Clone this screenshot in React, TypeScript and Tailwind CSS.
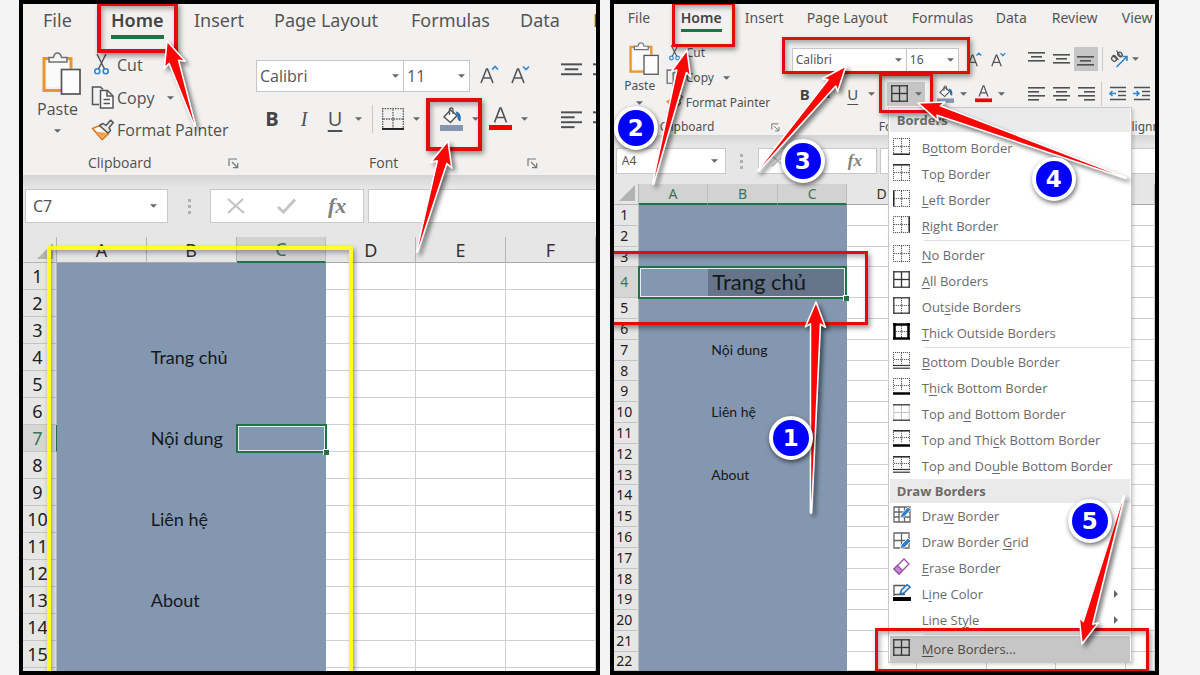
import type { ReactNode } from "react";

type Point = [number, number];
type Line = "dot" | "faint" | "thin" | "bold" | "thick" | "double";

const INK = "#505050";

function Caret({ className = "" }: { className?: string }) {
  return (
    <svg viewBox="0 0 8 4" className={`h-1 w-[7px] shrink-0 ${className}`} aria-hidden="true">
      <path d="M0 0h8L4 4z" fill="#666" />
    </svg>
  );
}

function PasteIcon({ className }: { className: string }) {
  return (
    <svg viewBox="0 0 39 43" className={className} fill="none" aria-hidden="true">
      <path d="M9 6.500H2v32h17M24 6.500h5v10" stroke="#e8962e" strokeWidth="3" />
      <path d="M5 9v26h14V17h8V9z" fill="#fafafa" />
      <path d="M7 10V5.500h4.500C12 2.500 13.500 1 15.500 1s3.500 1.500 4 4.500H25V10z" fill="#f7f7f7" stroke="#707070" strokeWidth="1.500" />
      <rect x="19.500" y="17.500" width="18.500" height="24.500" fill="#fdfdfd" stroke="#555" strokeWidth="1.700" />
    </svg>
  );
}

function CutIcon({ className }: { className: string }) {
  return (
    <svg viewBox="0 0 15 21" className={className} fill="none" aria-hidden="true">
      <path d="M3 0l7.500 15M12 0L4.500 15" stroke="#555" strokeWidth="1.500" />
      <circle cx="3.300" cy="17.300" r="2.500" stroke="#2f86cf" strokeWidth="1.600" />
      <circle cx="11.700" cy="17.300" r="2.500" stroke="#2f86cf" strokeWidth="1.600" />
    </svg>
  );
}

function CopyIcon({ className }: { className: string }) {
  return (
    <svg viewBox="0 0 24 23" className={className} fill="none" stroke="#555" strokeWidth="1.500" aria-hidden="true">
      <path d="M8 18.500H1.500V1h8L12 3.500" />
      <path d="M9.500 4.500h7l5.500 5.500v12H9.500z" fill="#fafafa" />
      <path d="M16 4.500V10h6M12.500 13.500h6.500M12.500 17.500h6.500" />
    </svg>
  );
}

function PainterIcon({ className }: { className: string }) {
  return (
    <svg viewBox="0 0 24 22" className={className} fill="none" aria-hidden="true">
      <path d="M9 6.500L1.500 9.500 11 20.500l6.500-6z" fill="#fff" stroke="#e07d1c" strokeWidth="1.800" strokeLinejoin="round" />
      <path d="M5 12.500L11 19l5-5z" fill="#f0a050" />
      <path d="M8.500 6.500L12 4.500l3 2 4.500-5.300 2.800 2.300-4.300 5.200 1.500 3-2.500 2.300z" fill="#e9e9e9" stroke="#555" strokeWidth="1.500" strokeLinejoin="round" />
    </svg>
  );
}

function Launcher({ className }: { className: string }) {
  return (
    <svg viewBox="0 0 11 11" className={className} fill="none" stroke="#777" strokeWidth="1.200" aria-hidden="true">
      <path d="M1 8V1h8M4 4l5.500 5.500M9.700 5v4.700H5" />
    </svg>
  );
}

function FontSizeIcon({ up, className }: { up?: boolean; className: string }) {
  return (
    <svg viewBox="0 0 19 19" className={className} fill="none" aria-hidden="true">
      <path d="M1 18L6.500 4h1L13 18M3 13h8" stroke="#555" strokeWidth="1.600" />
      <path d={up ? "M12 4.500L15 1.500l3 3" : "M12 1.500l3 3 3-3"} stroke="#2f86cf" strokeWidth="1.600" />
    </svg>
  );
}

function FillIcon({ className }: { className: string }) {
  return (
    <svg viewBox="0 0 23 24" className={className} fill="none" aria-hidden="true">
      <path d="M10.500 3L4 10l6.500 5.500L17 8.500z" fill="#fff" stroke="#555" strokeWidth="1.500" />
      <path d="M9.500 8V2.500c0-2 3.500-2 3.500 0V7" stroke="#555" strokeWidth="1.300" />
      <path d="M15.500 4.500c4.500.5 6 4 5 10-2.500-.5-3.500-3-3-5.500z" fill="#1f6fb8" />
      <path d="M0 18h23v6H0z" fill="#8497b0" />
    </svg>
  );
}

function FontColorIcon({ className }: { className: string }) {
  return (
    <svg viewBox="0 0 23 24" className={className} fill="none" aria-hidden="true">
      <path d="M5.500 15.500L11 1h1l5.500 14.500M7.500 10.500h8" stroke="#555" strokeWidth="1.700" />
      <path d="M0 18h23v5H0z" fill="#f20000" />
    </svg>
  );
}

function Bars({ rows, className }: { rows: [number, number][]; className: string }) {
  return (
    <svg viewBox="0 0 17 16" className={`shrink-0 ${className}`} aria-hidden="true">
      {rows.map(([x, w], i) => (
        <rect key={i} x={x} y={i * 4 + 1} width={w} height="1.600" fill={INK} />
      ))}
    </svg>
  );
}

const LEFT_BARS: [number, number][] = [[0, 17], [0, 11], [0, 17], [0, 11]];
const CENTER_BARS: [number, number][] = [[0, 17], [3, 11], [0, 17], [3, 11]];
const RIGHT_BARS: [number, number][] = [[0, 17], [6, 11], [0, 17], [6, 11]];
const THREE_BARS: [number, number][] = [[0, 17], [3, 11], [0, 17]];

function IndentIcon({ out }: { out?: boolean }) {
  return (
    <svg viewBox="0 0 17 16" className="h-4 w-[17px] shrink-0" fill="none" aria-hidden="true">
      <path d="M1 1.500h16M9 5.500h8M9 9.500h8M1 13.500h16" stroke={INK} strokeWidth="1.500" />
      <path d={out ? "M7 7.500H1M3.500 5L1 7.500 3.500 10" : "M0 7.500h6M3.500 5L6 7.500 3.500 10"} stroke="#2f86cf" strokeWidth="1.600" />
    </svg>
  );
}

function OrientationIcon() {
  return (
    <svg viewBox="0 0 18 18" className="h-[18px] w-[18px] shrink-0" fill="none" aria-hidden="true">
      <ellipse cx="4" cy="9" rx="2" ry="2.600" transform="rotate(-45 4 9)" stroke={INK} strokeWidth="1.300" />
      <path d="M2.500 6c1.500-1 2.500-.5 3.500 1l2.500 3M6.500.5l4.500 6.500" stroke={INK} strokeWidth="1.300" />
      <ellipse cx="10" cy="4.500" rx="2" ry="2.400" transform="rotate(-45 10 4.500)" stroke={INK} strokeWidth="1.300" />
      <path d="M6.500 17L16.500 7M12.500 6.500h4.500V11" stroke="#2f86cf" strokeWidth="1.600" />
    </svg>
  );
}

const LINE_STYLE: Record<Line, { stroke: string; width: number; dash?: string }> = {
  dot: { stroke: "#5c5c5c", width: 1, dash: "1.2 0.8" },
  faint: { stroke: "#c4c4c4", width: 1 },
  thin: { stroke: "#333", width: 1.3 },
  bold: { stroke: "#222", width: 1.5 },
  thick: { stroke: "#000", width: 2.5 },
  double: { stroke: "#333", width: 1.2 },
};

interface BorderProps {
  t?: Line;
  r?: Line;
  b?: Line;
  l?: Line;
  m?: Line;
  className?: string;
}

function BorderIcon({ t = "dot", r = "dot", b = "dot", l = "dot", m = "dot", className = "h-[17px] w-[17px]" }: BorderProps) {
  const low = b === "thick" || b === "double" ? (r === "thick" ? 15.5 : 12.5) : 16.5;
  const mid = low > 14 ? 8.5 : 7.5;
  const stroke = (kind: Line, d: string) => {
    const s = LINE_STYLE[kind];
    return <path d={d} stroke={s.stroke} strokeWidth={s.width} strokeDasharray={s.dash} />;
  };
  const near = (kind: Line) => (kind === "thick" ? 1.5 : kind === "dot" ? 0.5 : 0.8);
  const far = (kind: Line) => 17 - near(kind);
  return (
    <svg viewBox="0 0 17 17" className={`shrink-0 ${className}`} fill="none" aria-hidden="true">
      {stroke(m, `M8.500 1V${low}`)}
      {stroke(m, `M1 ${mid}H16.500`)}
      {m === "dot" && <circle cx="8.500" cy={mid} r="1.200" fill="#888" />}
      {stroke(l, `M${near(l)} 0V${low}`)}
      {stroke(r, `M${far(r)} 0V${low}`)}
      {stroke(t, `M0 ${near(t)}H17`)}
      {b === "double" && stroke(b, "M0 13.500H17")}
      {stroke(b, `M0 ${far(b)}H17`)}
    </svg>
  );
}

const ALL_THIN: BorderProps = { t: "thin", r: "thin", b: "thin", l: "thin", m: "thin" };

function PencilGrid({ low }: { low?: boolean }) {
  return (
    <svg viewBox="0 0 18 17" className="h-[17px] w-[18px] shrink-0" fill="none" aria-hidden="true">
      <path d={low ? "M1 1h15v15H1zM8.500 1v15M1 8.500h15" : "M1 1h16v15H1zM6 1v15M11.500 1v15M1 6h16M1 11h16"} stroke="#666" strokeWidth="1.300" />
      <path d={low ? "M7 17l1.500-4.500L15 6l3 3-6.500 6.500z" : "M7 12l1.500-4L15 1l3 2.500-6.500 7z"} fill="#2f7fc4" stroke="#fff" strokeWidth=".8" />
    </svg>
  );
}

function EraserIcon() {
  return (
    <svg viewBox="0 0 17 17" className="h-[17px] w-[17px] shrink-0" fill="none" aria-hidden="true">
      <path d="M11 1l5 5L6 16l-5-5z" fill="#fff" stroke="#9b4fa8" strokeWidth="1.300" />
      <path d="M4.500 7.500l5 5L6 16l-5-5z" fill="#c98ad3" stroke="#9b4fa8" strokeWidth="1.300" />
    </svg>
  );
}

function LineColorIcon() {
  return (
    <svg viewBox="0 0 18 17" className="h-[17px] w-[18px] shrink-0" fill="none" aria-hidden="true">
      <path d="M1 12V1.500h11M12 10.500H1" stroke="#555" strokeWidth="1.300" />
      <path d="M7 10l1.500-4L14 .7l3 2.300-6 6z" fill="#e8f2fb" stroke="#2271b5" strokeWidth="1.500" />
      <path d="M0 13h18v4H0z" fill="#000" />
    </svg>
  );
}

function CrossIcon({ className }: { className: string }) {
  return (
    <svg viewBox="0 0 18 16" className={className} fill="none" aria-hidden="true">
      <path d="M1 1l16 14M16 1L1 15" stroke="#c2c2c2" strokeWidth="2" />
    </svg>
  );
}

function CheckIcon({ className }: { className: string }) {
  return (
    <svg viewBox="0 0 19 16" className={className} fill="none" aria-hidden="true">
      <path d="M1 9l5.500 5L18 1.500" stroke="#c6c6c6" strokeWidth="3" />
    </svg>
  );
}

function Dots() {
  return (
    <span className="flex flex-col gap-[3px]" aria-hidden="true">
      <i className="block size-[3px] bg-[#b0b0b0]" />
      <i className="block size-[3px] bg-[#b0b0b0]" />
      <i className="block size-[3px] bg-[#b0b0b0]" />
    </span>
  );
}

function Arrow({ tip, tail, head = 25, half = 11, neck = 5 }: { tip: Point; tail: Point; head?: number; half?: number; neck?: number }) {
  const dx = tail[0] - tip[0];
  const dy = tail[1] - tip[1];
  const len = Math.hypot(dx, dy);
  const at = (along: number, side: number) =>
    `${tip[0] + (dx * along - dy * side) / len},${tip[1] + (dy * along + dx * side) / len}`;
  const points = [at(0, 0), at(head, half), at(head - 3, neck), at(len, 0.6), at(len, -0.6), at(head - 3, -neck), at(head, -half)];
  return <polygon points={points.join(" ")} fill="#fb0505" stroke="#fff" strokeWidth="1.600" strokeLinejoin="round" />;
}

function Mark({ className }: { className: string }) {
  return <div className={`pointer-events-none absolute z-20 shadow-[2px_3px_5px_rgba(0,0,0,0.4),inset_2px_3px_5px_rgba(0,0,0,0.3)] ${className}`} />;
}

function Badge({ n, className }: { n: number; className: string }) {
  return (
    <div className={`absolute z-30 flex size-11 items-center justify-center rounded-full border-4 border-white bg-[#0000fb] font-['DejaVu_Sans',sans-serif] text-[23px] font-bold text-white shadow-[1px_2px_5px_rgba(0,0,0,0.6)] ${className}`}>
      {n}
    </div>
  );
}

function Drop({ label, value, className, size }: { label: string; value: string; className: string; size: string }) {
  return (
    <label className={`flex shrink-0 items-center border border-[#c6c6c6] bg-white ${className}`}>
      <select aria-label={label} defaultValue={value} className={`min-w-0 flex-1 appearance-none bg-transparent pl-[3px] text-[#555] outline-none ${size}`}>
        <option>{value}</option>
      </select>
      <Caret className="mr-1" />
    </label>
  );
}

interface TabsProps {
  tabs: [string, string][];
  className: string;
  bar: string;
}

function Tabs({ tabs, className, bar }: TabsProps) {
  return (
    <nav className={`flex shrink-0 overflow-hidden whitespace-nowrap text-[#555] ${className}`}>
      {tabs.map(([name, width]) => (
        <button key={name} type="button" className={`flex shrink-0 flex-col items-start ${width}`}>
          {name === "Home" ? (
            <span className="flex flex-col font-semibold text-[#444]">
              {name}
              <span className={`bg-[#217346] ${bar}`} />
            </span>
          ) : (
            name
          )}
        </button>
      ))}
    </nav>
  );
}

interface SheetProps {
  columns: string[];
  widths: string[];
  rows: number;
  filler?: boolean;
  texts: Record<number, string>;
  activeCols: string[];
  activeRow: number;
  merged?: boolean;
  headRow: string;
  headCell: string;
  rowHead: string;
  rowSize: (n: number) => string;
  cellText: (n: number) => string;
}

function Sheet(p: SheetProps) {
  return (
    <table className="flex flex-1 flex-col bg-white">
      <thead className="block shrink-0">
        <tr className={`flex bg-[#e6e6e6] ${p.headRow}`}>
          <th className={`flex shrink-0 items-end justify-end border-r border-b border-[#b5b5b5] pr-[3px] pb-[3px] ${p.headCell}`}>
            <svg viewBox="0 0 10 10" className="size-4 shrink-0" aria-label="Select all">
              <path d="M10 0v10H0z" fill="#b3b3b3" />
            </svg>
          </th>
          {p.columns.map((c, i) => (
            <th
              key={c || "edge"}
              scope="col"
              className={`flex min-w-0 items-center justify-center overflow-hidden border-r font-normal ${p.widths[i]} ${
                p.activeCols.includes(c)
                  ? "border-b-2 border-r-[#bcbcbc] border-b-[#217346] bg-[#d2d2d2] text-[#3b7456]"
                  : "border-b border-r-[#b5b5b5] border-b-[#a8a8a8] text-[#333]"
              }`}
            >
              {c}
            </th>
          ))}
        </tr>
      </thead>
      <tbody className="flex flex-1 flex-col">
        {Array.from({ length: p.rows }, (_, i) => i + 1).map((n) => (
          <tr key={n} className={`flex ${p.rowSize(n)}`}>
            <th
              scope="row"
              className={`flex shrink-0 items-center justify-center border-r border-b border-b-[#c4c4c4] font-normal ${p.rowHead} ${
                n === p.activeRow ? "border-r-[#217346] bg-[#d6d6d6] text-[#3b7456]" : "border-r-[#bdbdbd] bg-[#e6e6e6] text-[#222]"
              }`}
            >
              {n}
            </th>
            {p.columns.map((c, i) => {
              const dark = p.merged && n === p.activeRow && (i === 1 || i === 2);
              const look = dark ? "border-[#667489] bg-[#667489]" : i < 3 ? "border-[#8497b0] bg-[#8497b0]" : "border-[#d0d0d0]";
              return (
                <td key={c || "edge"} className={`relative flex min-w-0 items-center border-r border-b ${p.widths[i]} ${look}`}>
                  {c === "B" && p.texts[n] && (
                    <span className={`z-10 whitespace-nowrap text-[#15181c] ${p.cellText(n)}`}>{p.texts[n]}</span>
                  )}
                  {n === p.activeRow && c === (p.merged ? "A" : "C") && (
                    <span className={`absolute -top-px -bottom-[2px] -left-px z-10 border-2 border-[#217346] ${p.merged ? "w-[calc(300%+4px)]" : "w-[calc(100%+3px)]"}`}>
                      <span className="block h-full border border-[#e8ecf1]" />
                      <span className="absolute -right-1 -bottom-1 size-[6px] border-t border-l border-white bg-[#217346]" />
                    </span>
                  )}
                </td>
              );
            })}
          </tr>
        ))}
        {p.filler && (
          <tr className="flex min-h-[3px] flex-1">
            <th className={`border-r border-[#bdbdbd] bg-[#e6e6e6] ${p.rowHead}`} />
            {p.columns.map((c, i) => (
              <td key={c} className={`border-r ${p.widths[i]} ${i < 3 ? "border-[#8497b0] bg-[#8497b0]" : "border-[#d0d0d0]"}`} />
            ))}
          </tr>
        )}
      </tbody>
    </table>
  );
}

const BIG_TABS: [string, string][] = [
  ["File", "w-[68px]"],
  ["Home", "w-[83px]"],
  ["Insert", "w-20"],
  ["Page Layout", "w-[137px]"],
  ["Formulas", "w-[109px]"],
  ["Data", "w-[73px]"],
  ["Review", "w-20"],
];

const SMALL_TABS: [string, string][] = [
  ["File", "w-[53px]"],
  ["Home", "w-16"],
  ["Insert", "w-[62px]"],
  ["Page Layout", "w-[105px]"],
  ["Formulas", "w-[84px]"],
  ["Data", "w-14"],
  ["Review", "w-[70px]"],
  ["View", "w-12"],
];

function FillPanel() {
  return (
    <section className="relative flex min-w-0 flex-[581] flex-col overflow-hidden border-4 border-black bg-[#f2f1f0]">
      <Tabs tabs={BIG_TABS} className="h-10 pt-[2px] pl-5 text-lg leading-7" bar="mt-px h-1" />
      <div className="flex h-[131px] shrink-0 overflow-hidden font-['Open_Sans','Noto_Sans',sans-serif] text-base whitespace-nowrap text-[#505050]">
        <div className="relative flex w-[222px] shrink-0 flex-col">
          <div className="flex h-[107px]">
            <button type="button" className="flex w-[69px] flex-col items-center pt-2">
              <PasteIcon className="ml-2 h-[43px] w-[39px]" />
              <span className="leading-7">Paste</span>
              <Caret className="mt-[6px]" />
            </button>
            <div className="flex flex-col pt-1">
              <button type="button" className="flex h-[33px] items-center">
                <CutIcon className="mr-2 ml-[2px] h-[21px] w-[15px]" />
                Cut
              </button>
              <button type="button" className="flex h-[33px] items-center">
                <CopyIcon className="mr-[2px] -ml-px h-[23px] w-6" />
                Copy
                <Caret className="ml-3" />
              </button>
              <button type="button" className="flex h-8 items-center">
                <PainterIcon className="mr-[2px] -ml-px h-[22px] w-6" />
                Format Painter
              </button>
            </div>
          </div>
          <div className="flex h-6 items-center justify-between pr-[6px] pl-[65px] text-sm">
            Clipboard
            <Launcher className="size-[11px]" />
          </div>
        </div>
        <div className="mt-[2px] mb-[5px] w-px bg-[#c4c4c4]" />
        <div className="flex w-[299px] shrink-0 flex-col">
          <div className="mt-4 flex h-8 pl-[11px]">
            <Drop label="Font" value="Calibri" className="w-[148px]" size="h-[30px] text-base" />
            <Drop label="Font size" value="11" className="-ml-px w-[67px]" size="h-[30px] text-base" />
            <button type="button" aria-label="Increase font size" className="ml-[10px]">
              <FontSizeIcon up className="mb-1 size-[19px]" />
            </button>
            <button type="button" aria-label="Decrease font size" className="ml-3">
              <FontSizeIcon className="mb-1 size-[19px]" />
            </button>
          </div>
          <div className="mt-[7px] flex h-10 items-center pl-[11px] text-xl">
            <button type="button" className="w-8 font-bold text-[#444]">B</button>
            <button type="button" className="w-8 font-['Liberation_Serif',serif] italic">I</button>
            <button type="button" className="w-[30px] underline underline-offset-4">U</button>
            <Caret className="ml-[5px]" />
            <div className="ml-[10px] h-7 w-px bg-[#c8c8c8]" />
            <button type="button" aria-label="Borders" className="ml-[9px] flex">
              <BorderIcon b="bold" className="size-[22px]" />
            </button>
            <Caret className="ml-[9px]" />
            <button type="button" aria-label="Fill color" className="ml-5 flex">
              <FillIcon className="h-6 w-[23px]" />
            </button>
            <Caret className="ml-[9px]" />
            <button type="button" aria-label="Font color" className="ml-[10px] flex">
              <FontColorIcon className="h-6 w-[23px]" />
            </button>
            <Caret className="ml-[9px]" />
          </div>
          <div className="mt-3 flex h-6 items-center justify-between pr-[6px] pl-[124px] text-sm">
            Font
            <Launcher className="size-[11px]" />
          </div>
        </div>
        <div className="mt-[2px] mb-[5px] w-px bg-[#c4c4c4]" />
        <div className="flex shrink-0 flex-col gap-[28px] pt-[18px] pl-[17px]">
          <div className="flex gap-[11px]">
            <Bars rows={THREE_BARS} className="h-5 w-[21px]" />
            <Bars rows={THREE_BARS} className="h-5 w-[21px]" />
          </div>
          <div className="flex gap-[11px]">
            <Bars rows={LEFT_BARS} className="h-5 w-[21px]" />
            <Bars rows={CENTER_BARS} className="h-5 w-[21px]" />
          </div>
        </div>
      </div>
      <div className="flex h-[62px] shrink-0 items-start bg-gradient-to-b from-[#d3d3d3] to-[#e6e6e6] to-20% pt-[14px] pl-[2px] text-[#555]">
        <label className="flex h-[34px] w-[143px] shrink-0 items-center border border-[#c8c8c8] bg-white">
          <input aria-label="Name box" defaultValue="C7" className="min-w-0 flex-1 pl-[7px] text-base outline-none" />
          <Caret className="mr-[10px]" />
        </label>
        <div className="flex h-[34px] w-[42px] shrink-0 items-center justify-center">
          <Dots />
        </div>
        <div className="flex h-[34px] w-[154px] shrink-0 items-center border border-[#c8c8c8] bg-white">
          <button type="button" aria-label="Cancel" className="ml-4"><CrossIcon className="h-4 w-[18px]" /></button>
          <button type="button" aria-label="Enter" className="ml-8"><CheckIcon className="h-4 w-[19px]" /></button>
          <button type="button" className="ml-8 font-['Liberation_Serif',serif] text-[22px] leading-7 font-bold text-[#808080] italic">fx</button>
        </div>
        <input aria-label="Formula" className="ml-1 h-[34px] min-w-0 flex-1 border border-r-0 border-[#c8c8c8] bg-white px-2 outline-none" />
      </div>
      <Sheet
        columns={["A", "B", "C", "D", "E", "F"]}
        widths={["flex-1", "flex-1", "flex-1", "flex-1", "flex-1", "flex-1"]}
        rows={15}
        filler
        texts={{ 4: "Trang chủ", 7: "Nội dung", 10: "Liên hệ", 13: "About" }}
        activeCols={["C"]}
        activeRow={7}
        headRow="h-[26px] text-lg"
        headCell="w-[34px]"
        rowHead="w-[34px] pr-1 text-lg leading-6"
        rowSize={() => "h-[27px] shrink-0"}
        cellText={() => "pl-[4px] font-['Lato','Noto_Sans',sans-serif] text-lg leading-6"}
      />
      <Mark className="top-[242px] -bottom-2 left-6 w-[306px] border-4 border-[#ffff20]" />
      <Mark className="-top-[2px] left-[74px] h-[51px] w-[81px] border-4 border-[#e30b0b]" />
      <Mark className="top-[94px] left-[403px] h-[53px] w-14 border-4 border-[#e30b0b]" />
      <svg viewBox="23 4 573 667" className="pointer-events-none absolute top-0 left-0 z-20 h-[667px] w-[573px] drop-shadow-[3px_3px_2px_rgba(0,0,0,0.5)]" aria-hidden="true">
        <Arrow tip={[167, 41]} tail={[195, 126]} />
        <Arrow tip={[448, 141]} tail={[417, 252]} />
      </svg>
    </section>
  );
}

type Item = { icon: ReactNode; before: string; key: string; after: string; sub?: boolean };

const item = (icon: ReactNode, before: string, key: string, after: string, sub = false): Item => ({ icon, before, key, after, sub });

const SIDES = [
  item(<BorderIcon b="bold" />, "B", "o", "ttom Border"),
  item(<BorderIcon t="bold" />, "To", "p", " Border"),
  item(<BorderIcon l="bold" />, "", "L", "eft Border"),
  item(<BorderIcon r="bold" />, "", "R", "ight Border"),
];

const WHOLE = [
  item(<BorderIcon />, "", "N", "o Border"),
  item(<BorderIcon {...ALL_THIN} />, "", "A", "ll Borders"),
  item(<BorderIcon t="thin" r="thin" b="thin" l="thin" />, "Out", "s", "ide Borders"),
  item(<BorderIcon t="thick" r="thick" b="thick" l="thick" />, "", "T", "hick Outside Borders"),
];

const MIXED = [
  item(<BorderIcon b="double" />, "", "B", "ottom Double Border"),
  item(<BorderIcon b="thick" />, "T", "h", "ick Bottom Border"),
  item(<BorderIcon t="thin" b="thin" l="faint" r="faint" m="faint" />, "Top an", "d", " Bottom Border"),
  item(<BorderIcon t="bold" b="thick" />, "Top and Thi", "c", "k Bottom Border"),
  item(<BorderIcon t="bold" b="double" />, "Top and Do", "u", "ble Bottom Border"),
];

const DRAW = [
  item(<PencilGrid />, "Dra", "w", " Border"),
  item(<PencilGrid low />, "Draw Border ", "G", "rid"),
  item(<EraserIcon />, "", "E", "rase Border"),
  item(<LineColorIcon />, "L", "i", "ne Color", true),
  item(null, "Line St", "y", "le", true),
];

const MORE = [item(<BorderIcon {...ALL_THIN} />, "", "M", "ore Borders...")];

function MenuItems({ items, active }: { items: Item[]; active?: boolean }) {
  return items.map((it) => (
    <button
      key={it.before + it.key + it.after}
      type="button"
      role="menuitem"
      className={`flex h-[26px] w-full items-center pl-[3px] ${active ? "bg-[#c6c6c6] text-[#4a4a4a]" : "text-[#6a6a6a]"}`}
    >
      <span className="w-[29px] shrink-0 pb-[3px] text-left">{it.icon}</span>
      <span>
        {it.before}
        <u className="underline-offset-2">{it.key}</u>
        {it.after}
      </span>
      {it.sub && (
        <svg viewBox="0 0 4 8" className="mr-3 ml-auto h-2 w-1" aria-hidden="true">
          <path d="M0 0l4 4-4 4z" fill="#666" />
        </svg>
      )}
    </button>
  ));
}

function BordersMenu() {
  return (
    <div role="menu" className="absolute top-[103px] left-[274px] z-20 w-[244px] border border-[#c8c8c8] bg-white px-px font-['Open_Sans','Noto_Sans',sans-serif] text-[13px] leading-5 whitespace-nowrap shadow-[2px_2px_3px_rgba(0,0,0,0.15)]">
      <div className="mb-[3px] flex h-6 items-center bg-[#eaeaea] pl-[7px] font-bold text-[#6a6a6a]">Borders</div>
      <MenuItems items={SIDES} />
      <div className="my-px ml-[34px] h-px bg-[#dedede]" />
      <MenuItems items={WHOLE} />
      <div className="my-px ml-[34px] h-px bg-[#dedede]" />
      <MenuItems items={MIXED} />
      <div className="flex h-6 items-center bg-[#eaeaea] pl-[7px] font-bold text-[#6a6a6a]">Draw Borders</div>
      <MenuItems items={DRAW} />
      <div className="my-px ml-[34px] h-px bg-[#dedede]" />
      <MenuItems items={MORE} active />
    </div>
  );
}

function BordersPanel() {
  return (
    <section className="relative flex min-w-0 flex-[549] flex-col overflow-hidden border-4 border-black bg-[#f2f1f0]">
      <Tabs tabs={SMALL_TABS} className="h-8 pt-[2px] pl-[14px] text-sm leading-[23px]" bar="h-[3px]" />
      <div className="flex h-[99px] shrink-0 overflow-hidden text-xs whitespace-nowrap text-[#505050]">
        <div className="flex w-[170px] shrink-0 flex-col">
          <div className="flex h-20">
            <button type="button" className="flex w-[52px] flex-col items-center pt-[6px]">
              <PasteIcon className="ml-2 h-[33px] w-[30px]" />
              <span className="leading-[22px]">Paste</span>
              <Caret className="mt-1" />
            </button>
            <div className="flex flex-col pt-1">
              <button type="button" className="flex h-[25px] items-center">
                <CutIcon className="mr-[6px] ml-[3px] h-4 w-[11px]" />
                Cut
              </button>
              <button type="button" className="flex h-[25px] items-center">
                <CopyIcon className="mr-[2px] h-[18px] w-[18px]" />
                Copy
                <Caret className="ml-[9px]" />
              </button>
              <button type="button" className="flex h-[25px] items-center">
                <PainterIcon className="mr-[2px] h-[17px] w-[18px]" />
                Format Painter
              </button>
            </div>
          </div>
          <div className="mt-[3px] flex h-4 items-center justify-between pr-1 pl-[46px]">
            Clipboard
            <Launcher className="size-[9px]" />
          </div>
        </div>
        <div className="mt-px mb-1 w-px bg-[#c4c4c4]" />
        <div className="flex w-[230px] shrink-0 flex-col">
          <div className="mt-3 flex h-6 pl-2">
            <Drop label="Font" value="Calibri" className="w-[115px]" size="h-[22px] text-xs" />
            <Drop label="Font size" value="16" className="-ml-px w-[53px]" size="h-[22px] text-xs" />
            <button type="button" aria-label="Increase font size" className="ml-2">
              <FontSizeIcon up className="mb-px size-[15px]" />
            </button>
            <button type="button" aria-label="Decrease font size" className="ml-[9px]">
              <FontSizeIcon className="mb-px size-[15px]" />
            </button>
          </div>
          <div className="mt-2 flex h-[27px] items-center pl-[9px] text-[15px]">
            <button type="button" className="w-6 font-bold text-[#444]">B</button>
            <button type="button" className="w-6 font-['Liberation_Serif',serif] italic">I</button>
            <button type="button" className="w-6 underline underline-offset-4">U</button>
            <Caret className="ml-[3px]" />
            <button type="button" aria-label="Borders" className="ml-3 flex h-6 w-[38px] shrink-0 items-center bg-[#c6c6c6] pl-1">
              <BorderIcon {...ALL_THIN} />
              <Caret className="ml-[7px]" />
            </button>
            <button type="button" aria-label="Fill color" className="ml-3 flex">
              <FillIcon className="h-[18px] w-[17px]" />
            </button>
            <Caret className="ml-[6px]" />
            <button type="button" aria-label="Font color" className="ml-2 flex">
              <FontColorIcon className="h-[18px] w-[17px]" />
            </button>
            <Caret className="ml-[6px]" />
          </div>
          <div className="mt-3 flex h-4 items-center pl-[95px]">Font</div>
        </div>
        <div className="mt-px mb-1 w-px bg-[#c4c4c4]" />
        <div className="flex shrink-0 flex-col pl-[14px]">
          <div className="mt-[11px] flex h-6 items-center">
            <Bars rows={THREE_BARS} className="h-4 w-[17px]" />
            <Bars rows={THREE_BARS} className="mt-1 ml-2 h-4 w-[17px]" />
            <span className="ml-1 flex h-6 w-6 items-end justify-center bg-[#c6c6c6]">
              <Bars rows={THREE_BARS} className="h-4 w-[17px]" />
            </span>
            <div className="mr-[7px] ml-1 h-full w-px bg-[#c8c8c8]" />
            <OrientationIcon />
            <Caret className="ml-1" />
          </div>
          <div className="mt-[9px] flex h-[27px] items-center">
            <Bars rows={LEFT_BARS} className="h-4 w-[17px]" />
            <Bars rows={CENTER_BARS} className="ml-2 h-4 w-[17px]" />
            <Bars rows={RIGHT_BARS} className="ml-2 h-4 w-[17px]" />
            <div className="mr-[7px] ml-[6px] h-6 w-px bg-[#c8c8c8]" />
            <IndentIcon out />
            <span className="w-[7px]" />
            <IndentIcon />
          </div>
          <div className="mt-3 flex h-4 items-center pl-24">Alignment</div>
        </div>
      </div>
      <div className="flex h-[49px] shrink-0 items-start bg-gradient-to-b from-[#d3d3d3] to-[#e6e6e6] to-20% pt-[13px] pl-[2px] text-[#555]">
        <label className="flex h-[26px] w-[110px] shrink-0 items-center border border-[#c8c8c8] bg-white">
          <input aria-label="Name box" defaultValue="A4" className="min-w-0 flex-1 pl-[5px] text-xs outline-none" />
          <Caret className="mr-[7px]" />
        </label>
        <div className="flex h-[26px] w-8 shrink-0 items-center justify-center">
          <Dots />
        </div>
        <div className="flex h-[26px] w-[119px] shrink-0 items-center border border-[#c8c8c8] bg-white">
          <button type="button" aria-label="Cancel" className="ml-3"><CrossIcon className="h-3 w-[14px]" /></button>
          <button type="button" aria-label="Enter" className="ml-6"><CheckIcon className="h-3 w-[15px]" /></button>
          <button type="button" className="ml-6 font-['Liberation_Serif',serif] text-[17px] leading-5 font-bold text-[#808080] italic">fx</button>
        </div>
        <input aria-label="Formula" className="ml-[3px] h-[26px] min-w-0 flex-1 border border-r-0 border-[#c8c8c8] bg-white px-2 outline-none" />
      </div>
      <Sheet
        columns={["A", "B", "C", "D", "E", "F", "G", ""]}
        widths={["flex-[70]", "flex-[70]", "flex-[70]", "flex-[70]", "flex-[70]", "flex-[70]", "flex-[70]", "flex-[29]"]}
        rows={22}
        texts={{ 4: "Trang chủ", 7: "Nội dung", 10: "Liên hệ", 13: "About" }}
        activeCols={["A", "B", "C"]}
        activeRow={4}
        merged
        headRow="h-[21px] text-sm leading-4"
        headCell="w-[25px]"
        rowHead="w-[25px] pr-[3px] text-sm leading-[18px]"
        rowSize={(n) => (n === 4 ? "flex-[31]" : n === 22 ? "flex-[19]" : "flex-[21]")}
        cellText={(n) =>
          n === 4
            ? "pl-1 font-['Lato','Noto_Sans',sans-serif] text-[22px] leading-7"
            : "pl-[3px] font-['Lato','Noto_Sans',sans-serif] text-sm leading-[18px]"
        }
      />
      <BordersMenu />
      <Mark className="-top-[2px] left-[58px] h-[45px] w-[63px] border-3 border-[#e30b0b]" />
      <Mark className="top-[33px] left-[168px] h-[37px] w-[188px] border-3 border-[#e30b0b]" />
      <Mark className="top-[69px] left-[265px] h-10 w-[54px] border-3 border-[#e30b0b]" />
      <Mark className="top-[247px] -left-2 h-[74px] w-[262px] border-3 border-[#e30b0b]" />
      <Mark className="top-[624px] left-[261px] h-11 w-[274px] border-3 border-[#e30b0b]" />
      <svg viewBox="614 4 541 667" className="pointer-events-none absolute top-0 left-0 z-20 h-[667px] w-[541px] drop-shadow-[3px_3px_2px_rgba(0,0,0,0.5)]" aria-hidden="true">
        <Arrow tip={[816, 302]} tail={[811, 513]} half={10} />
        <Arrow tip={[687, 50]} tail={[653, 184]} half={10} />
        <Arrow tip={[846, 66]} tail={[758, 171]} half={10} />
        <Arrow tip={[918, 103]} tail={[1126, 178]} half={10} />
        <Arrow tip={[1082, 644]} tail={[1124, 496]} half={10} />
      </svg>
      <Badge n={1} className="top-[412px] left-[155px]" />
      <Badge n={2} className="top-[102px] left-0" />
      <Badge n={3} className="top-[135px] left-[167px]" />
      <Badge n={4} className="top-[153px] left-[418px]" />
      <Badge n={5} className="top-[495px] left-[454px]" />
    </section>
  );
}

export default function App() {
  return (
    <main className="flex min-h-screen gap-[10px] bg-[#f3f3f3] pr-[41px] pl-[19px] font-['Noto_Sans','Open_Sans',sans-serif]">
      <FillPanel />
      <BordersPanel />
    </main>
  );
}
